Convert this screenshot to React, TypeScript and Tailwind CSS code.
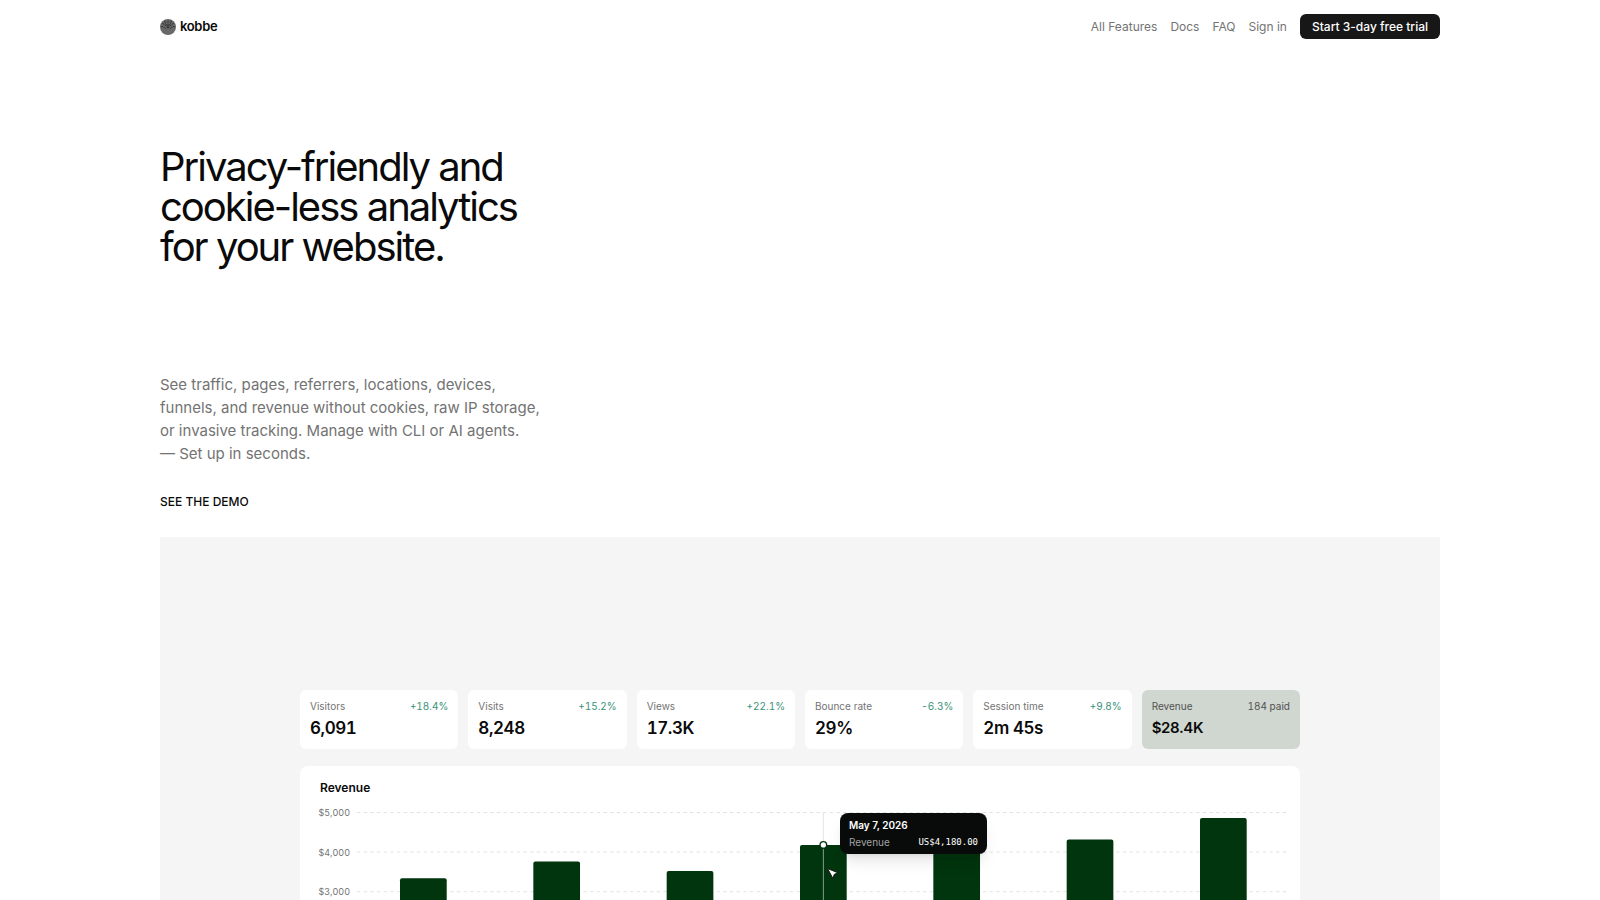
const navLinks = ['All Features', 'Docs', 'FAQ', 'Sign in'];

const stats = [
  { label: 'Visitors', value: '6,091', change: '+18.4%' },
  { label: 'Visits', value: '8,248', change: '+15.2%' },
  { label: 'Views', value: '17.3K', change: '+22.1%' },
  { label: 'Bounce rate', value: '29%', change: '-6.3%' },
  { label: 'Session time', value: '2m 45s', change: '+9.8%' },
];

const revenue = [3340, 3760, 3520, 4180, 4050, 4320, 4860];
const ticks = [5000, 4000, 3000, 2000, 1000, 0];

const CHART_TOP = 46.5;
const CHART_BOTTOM = 244.5;
const toY = (value: number) =>
  CHART_BOTTOM - (value / 5000) * (CHART_BOTTOM - CHART_TOP);
const toX = (index: number) => 100 + index * (400 / 3);
const BAR_WIDTH = 46.7;

function Logo() {
  return (
    <svg viewBox="0 0 16 16" className="size-4" aria-hidden="true">
      <circle cx="8" cy="8" r="8" fill="#696969" />
      <path
        d="M8 1.5v8M5 1.8v2.6L8 7M11 1.8v2.6L8 7M2.4 4.4l2.4 1.4L8 9M13.6 4.4l-2.4 1.4L8 9M1.2 7.4l3 .8L6.5 10M14.8 7.4l-3 .8L9.5 10"
        stroke="#2e2e2e"
        strokeWidth="1"
        strokeDasharray="2.2 0.6"
        fill="none"
      />
    </svg>
  );
}

function StatCard({ label, value, change }: { label: string; value: string; change: string }) {
  return (
    <div className="flex h-[59px] min-w-0 flex-1 flex-col rounded-md bg-white px-2.5 pt-2.5">
      <div className="flex items-center justify-between text-[10px] leading-3">
        <span className="text-[#737373]">{label}</span>
        <span className="text-[#38917a] tabular-nums">{change}</span>
      </div>
      <div className="mt-1 text-[17px] leading-[25px] font-semibold tracking-tight tabular-nums">{value}</div>
    </div>
  );
}

function RevenueChart() {
  const hoverX = toX(3) + BAR_WIDTH / 2;
  return (
    <div className="relative mt-[17px] rounded-lg bg-white pb-5">
      <h2 className="px-5 pt-3.5 text-xs leading-4 font-semibold">Revenue</h2>
      <svg viewBox="0 30 1000 240" className="block w-full" role="img" aria-label="Daily revenue">
        {ticks.map((tick) => (
          <g key={tick}>
            <text x="50" y={toY(tick) + 3.5} textAnchor="end" className="fill-[#737373] text-[9px] tabular-nums">
              {'$' + tick.toLocaleString('en-US')}
            </text>
            <line x1="57" x2="987" y1={toY(tick)} y2={toY(tick)} stroke="#e2e2e2" strokeDasharray="3.33 3.33" />
          </g>
        ))}
        <line x1={hoverX} x2={hoverX} y1={CHART_TOP} y2={CHART_BOTTOM} stroke="#e5e5e5" />
        {revenue.map((value, i) => (
          <path
            key={i}
            d={`M${toX(i)} ${CHART_BOTTOM}V${toY(value) + 2}q0 -2 2 -2h${BAR_WIDTH - 4}q2 0 2 2V${CHART_BOTTOM}z`}
            fill="#00350d"
          />
        ))}
        <line x1={hoverX} x2={hoverX} y1={toY(4180)} y2={CHART_BOTTOM} stroke="#86a08b" />
        <circle cx={hoverX} cy={toY(4180)} r="3.3" fill="#fff" stroke="#00350d" strokeWidth="1.4" />
        <path d="M527.5 102.5L538 106.8L534.2 108.4L533 112.6Z" fill="#fff" stroke="#171717" strokeWidth="1" strokeLinejoin="round" />
      </svg>
      <div className="absolute top-[47px] left-[54%] w-[147px] rounded-lg bg-[#090b0a] px-[9px] py-1.5 text-[10px] leading-3 text-white shadow-lg">
        <div className="font-semibold">May 7, 2026</div>
        <div className="mt-[5px] flex justify-between">
          <span className="text-[#a3a3a3]">Revenue</span>
          <span className="font-['DejaVu_Sans_Mono',monospace] text-[9px] font-medium">US$4,180.00</span>
        </div>
      </div>
    </div>
  );
}

export default function App() {
  return (
    <div className="min-h-screen bg-white px-6 font-['Inter',sans-serif] text-[#0a0a0a]">
      <div className="mx-auto max-w-7xl">
        <header className="flex h-[53px] items-center justify-between">
          <a href="#" className="flex items-center gap-1 text-[13px] font-semibold tracking-tight">
            <Logo />
            kobbe
          </a>
          <nav className="flex items-center gap-[13px] text-xs text-[#737373]">
            {navLinks.map((link) => (
              <a key={link} href="#">{link}</a>
            ))}
            <a href="#" className="rounded-md bg-[#171717] px-3 py-1 leading-[17px] font-medium text-white">
              Start 3-day free trial
            </a>
          </nav>
        </header>
        <main>
          <h1 className="mt-[94px] max-w-96 text-[40px] leading-10 font-normal tracking-tighter">
            Privacy-friendly and cookie-less analytics for your website.
          </h1>
          <p className="mt-[106px] max-w-96 text-[15px] leading-[23px] text-[#737373]">
            See traffic, pages, referrers, locations, devices, funnels, and revenue without cookies, raw IP
            storage, or invasive tracking. Manage with CLI or AI agents.
            <br />— Set up in seconds.
          </p>
          <a href="#demo" className="mt-[29px] block w-fit text-xs leading-4 font-medium">SEE THE DEMO</a>
          <section id="demo" className="mt-[27px] bg-[#f5f5f5] px-[140px] pt-[153px] pb-20">
            <div className="mx-auto max-w-[1000px]">
              <div className="flex gap-2.5">
                {stats.map((stat) => (
                  <StatCard key={stat.label} {...stat} />
                ))}
                <div className="flex h-[59px] min-w-0 flex-1 flex-col rounded-md bg-[#cfd7d0] px-2.5 pt-2.5">
                  <div className="flex items-center justify-between text-[10px] leading-3 text-[#525252]">
                    <span>Revenue</span>
                    <span className="tabular-nums">184 paid</span>
                  </div>
                  <div className="mt-1 text-[15px] leading-[23px] font-semibold tracking-tight">$28.4K</div>
                </div>
              </div>
              <RevenueChart />
            </div>
          </section>
        </main>
      </div>
    </div>
  );
}
